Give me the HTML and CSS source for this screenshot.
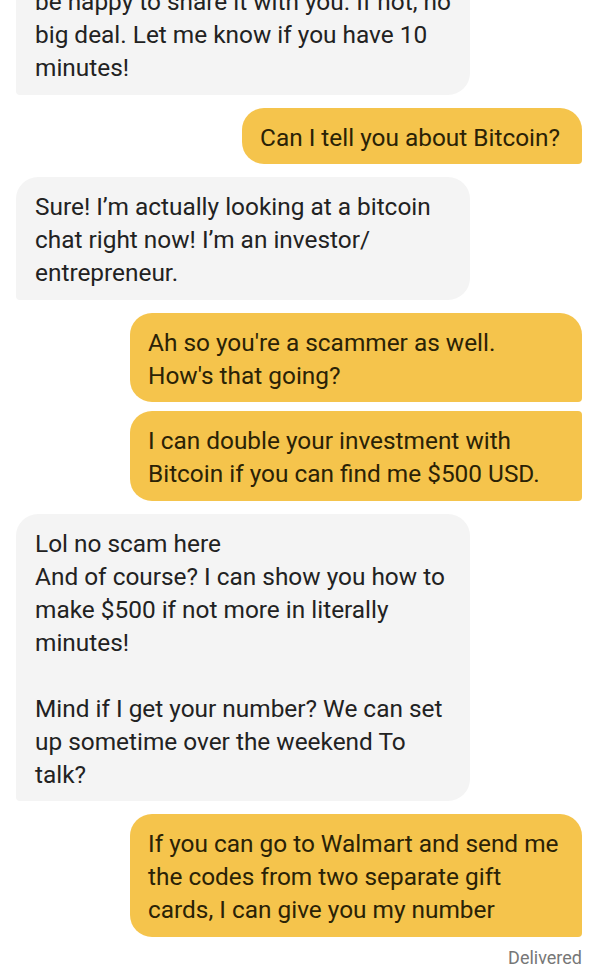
FILE: index.html
```html
<!DOCTYPE html>
<html lang="en">
<head>
<meta charset="utf-8">
<title>Chat</title>
<link rel="stylesheet" href="styles.css">
</head>
<body>
<div class="chat">
  <div class="msg in">be happy to share it with you. If not, no big deal. Let me know if you have 10 minutes!</div>
  <div class="msg out">Can I tell you about Bitcoin?</div>
  <div class="msg in">Sure! I’m actually looking at a bitcoin chat right now! I’m an investor/<wbr>entrepreneur.</div>
  <div class="group">
    <div class="msg out">Ah so you're a scammer as well. How's that going?</div>
    <div class="msg out next">I can double your investment with Bitcoin if you can find me $500 USD.</div>
  </div>
  <div class="msg in">Lol no scam here<br>And of course? I can show you how to make $500 if not more in literally minutes!<br><br>Mind if I get your number? We can set up sometime over the weekend To talk?</div>
  <div class="msg out">If you can go to Walmart and send me the codes from two separate gift cards, I can give you my number</div>
  <div class="status">Delivered</div>
</div>
</body>
</html>
```
FILE: styles.css
```css
html, body {
  margin: 0;
  padding: 0;
  background: #ffffff;
}

body {
  width: 599px;
  height: 977px;
  overflow: hidden;
  font-family: Roboto, "Noto Sans", "Liberation Sans", sans-serif;
}

.chat {
  display: flex;
  flex-direction: column;
  gap: 13px;
  padding: 0 17px 0 16px;
  margin-top: -28px;
}

.group {
  display: flex;
  flex-direction: column;
  align-items: flex-end;
  gap: 9px;
}

.msg {
  box-sizing: border-box;
  max-width: 454px;
  padding: 13px 18px 10.5px 19px;
  font-size: 24.4px;
  line-height: 33px;
}

.in {
  align-self: flex-start;
  background: #f4f4f4;
  color: #222222;
  border-radius: 22px 22px 22px 4px;
}

.out {
  align-self: flex-end;
  max-width: 452px;
  background: #f5c44c;
  color: #2a2206;
  border-radius: 22px 22px 4px 22px;
  padding-left: 18px;
  padding-right: 22px;
}

.out.next {
  border-top-right-radius: 4px;
}

.status {
  align-self: flex-end;
  margin-top: -4px;
  font-size: 18px;
  line-height: 24px;
  color: #777777;
}
```
